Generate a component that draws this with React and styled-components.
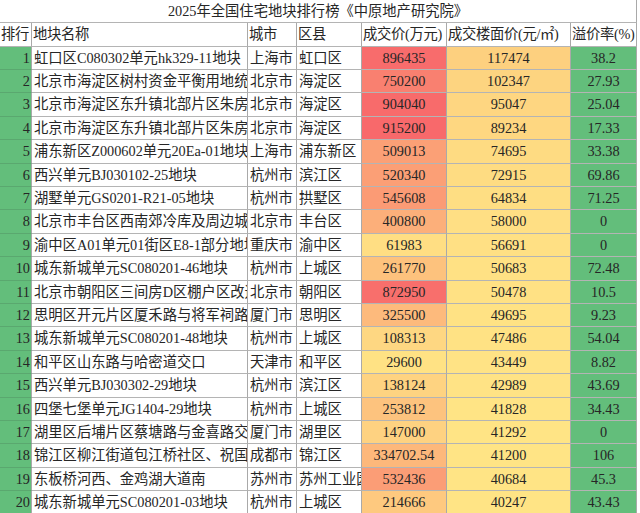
import styled, { createGlobalStyle } from "styled-components"

const rows = [
    [1, "虹口区C080302单元hk329-11地块", "上海市", "虹口区", "896435", 117474, "38.2"],
    [2, "北京市海淀区树村资金平衡用地统", "北京市", "海淀区", "750200", 102347, "27.93"],
    [3, "北京市海淀区东升镇北部片区朱房", "北京市", "海淀区", "904040", 95047, "25.04"],
    [4, "北京市海淀区东升镇北部片区朱房", "北京市", "海淀区", "915200", 89234, "17.33"],
    [5, "浦东新区Z000602单元20Ea-01地块", "上海市", "浦东新区", "509013", 74695, "33.38"],
    [6, "西兴单元BJ030102-25地块", "杭州市", "滨江区", "520340", 72915, "69.86"],
    [7, "湖墅单元GS0201-R21-05地块", "杭州市", "拱墅区", "545608", 64834, "71.25"],
    [8, "北京市丰台区西南郊冷库及周边城", "北京市", "丰台区", "400800", 58000, "0"],
    [9, "渝中区A01单元01街区E8-1部分地块", "重庆市", "渝中区", "61983", 56691, "0"],
    [10, "城东新城单元SC080201-46地块", "杭州市", "上城区", "261770", 50683, "72.48"],
    [11, "北京市朝阳区三间房D区棚户区改造", "北京市", "朝阳区", "872950", 50478, "10.5"],
    [12, "思明区开元片区厦禾路与将军祠路", "厦门市", "思明区", "325500", 49695, "9.23"],
    [13, "城东新城单元SC080201-48地块", "杭州市", "上城区", "108313", 47486, "54.04"],
    [14, "和平区山东路与哈密道交口", "天津市", "和平区", "29600", 43449, "8.82"],
    [15, "西兴单元BJ030302-29地块", "杭州市", "滨江区", "138124", 42989, "43.69"],
    [16, "四堡七堡单元JG1404-29地块", "杭州市", "上城区", "253812", 41828, "34.43"],
    [17, "湖里区后埔片区蔡塘路与金喜路交", "厦门市", "湖里区", "147000", 41292, "0"],
    [18, "锦江区柳江街道包江桥社区、祝国", "成都市", "锦江区", "334702.54", 41200, "106"],
    [19, "东板桥河西、金鸡湖大道南", "苏州市", "苏州工业园区", "532436", 40684, "45.3"],
    [20, "城东新城单元SC080201-03地块", "杭州市", "上城区", "214666", 40247, "43.43"],
]

const headers = ["排行", "地块名称", "城市", "区县", "成交价(万元)", "成交楼面价(元/㎡)", "溢价率(%)"]

// two-stop colour scale, like the sheet's conditional formatting
function scale(v, min, max, from, to) {
    const t = Math.max(0, Math.min(1, (v - min) / (max - min)))
    const c = from.map((f, i) => Math.round(f + (to[i] - f) * t))
    return `rgb(${c.join(",")})`
}

const prices = rows.map(r => parseFloat(r[4]))
const floors = rows.map(r => r[5])
const pMin = Math.min(...prices), pMax = Math.max(...prices)
const fMin = Math.min(...floors), fMax = Math.max(...floors)

export default function App() {
    return (
        <>
            <Global />
            <Sheet>
                <Title>2025年全国住宅地块排行榜《中原地产研究院》</Title>
                {headers.map(h => <Head key={h}>{h}</Head>)}
                {rows.map(r => (
                    <Row key={r[0]}>
                        <Rank>{r[0]}</Rank>
                        <Text>{r[1]}</Text>
                        <Text>{r[2]}</Text>
                        <Text>{r[3]}</Text>
                        <Num $bg={scale(parseFloat(r[4]), pMin, pMax, [255, 226, 132], [248, 105, 107])}>{r[4]}</Num>
                        <Num $bg={scale(r[5], fMin, fMax, [255, 228, 133], [253, 208, 127])}>{r[5]}</Num>
                        <Num $bg="#63be7b">{r[6]}</Num>
                    </Row>
                ))}
            </Sheet>
        </>
    )
}

const Global = createGlobalStyle`
    body{
        margin: 0;
        background: #fff;
        font-family: "Liberation Serif", "Noto Sans CJK SC", serif;
        font-size: 14.3px;
        color: #262626;
    }
`

const Sheet = styled.div`
    width: 637px;
    height: 513px;
    overflow: hidden;
    display: grid;
    grid-template-columns: 32px 216px 49px 65px 85px 124px 66px;
    grid-template-rows: 23.3px;
    grid-auto-rows: 23.4px;
`

const Row = styled.div`
    display: contents;
`

const Cell = styled.div`
    box-sizing: border-box;
    border-right: 1px solid #a9a9a9;
    border-bottom: 1px solid #b4b4b4;
    white-space: nowrap;
    overflow: hidden;
    line-height: 22px;
    padding: 0 2px;
`

const Title = styled(Cell)`
    grid-column: 1 / -1;
    text-align: center;
`

const Head = styled(Cell)`
    background: #fff;
    padding: 0 0 0 1px;
    letter-spacing: -0.3px;
`

const Rank = styled(Cell)`
    background: #63be7b;
    text-align: right;
    padding-right: 1px;
    border-bottom-color: #5aa86f;
`

const Text = styled(Cell)`
    padding: 0 0 0 2px;
    text-overflow: clip;
`

const Num = styled(Cell)`
    background: ${p => p.$bg};
    text-align: center;
`
